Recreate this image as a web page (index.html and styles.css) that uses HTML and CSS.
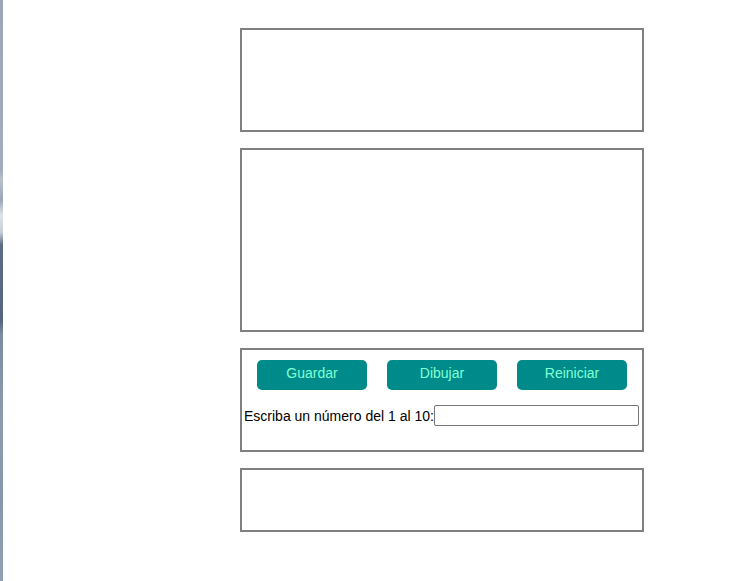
FILE: index.html
```html
<!DOCTYPE html>
<html lang="es">
<head>
<meta charset="utf-8">
<title>Dibujar</title>
<link rel="stylesheet" href="styles.css">
</head>
<body>
<div class="edge"></div>
<main class="page">
  <section class="panel panel-top"></section>
  <section class="panel panel-canvas"></section>
  <section class="panel panel-controls">
    <div class="buttons">
      <button class="btn" type="button">Guardar</button>
      <button class="btn" type="button">Dibujar</button>
      <button class="btn" type="button">Reiniciar</button>
    </div>
    <div class="field">
      <label class="field-label" for="num">Escriba un número del 1 al 10:</label><input class="field-input" id="num" type="text">
    </div>
  </section>
  <section class="panel panel-bottom"></section>
</main>
</body>
</html>
```
FILE: styles.css
```css
html, body {
  margin: 0;
  padding: 0;
  height: 100%;
  background: #ffffff;
}
body {
  display: flex;
  font-family: "Liberation Sans", Arial, sans-serif;
  font-size: 14px;
  color: #000;
}
.edge {
  flex: 0 0 3px;
  min-height: 581px;
  background: linear-gradient(to bottom,
    #9ba7b7 0px, #a3adbb 170px, #b8c0cc 180px, #9aa6b6 200px,
    #dfe3e8 215px, #c9cfd8 232px, #5d6c82 245px, #56657c 320px,
    #7d8ca1 335px, #8e9bae 420px, #8796aa 500px, #93a0b2 581px);
}
.page {
  flex: 1;
  display: flex;
  flex-direction: column;
  gap: 16px;
  padding: 28px 0 0 237px;
}
.panel {
  box-sizing: border-box;
  width: 404px;
  border: 2px solid #808080;
}
.panel-top { height: 104px; }
.panel-canvas { height: 184px; }
.panel-controls {
  height: 104px;
  display: flex;
  flex-direction: column;
  padding: 10px 0 0 2px;
}
.panel-bottom { height: 64px; }
.buttons {
  display: flex;
  justify-content: center;
  gap: 20px;
  padding-right: 2px;
}
.btn {
  width: 110px;
  height: 30px;
  border: none;
  border-radius: 5px;
  background: #008b8b;
  color: #7fffd4;
  font-family: "Liberation Sans", Arial, sans-serif;
  font-size: 14px;
  padding: 0 0 4px;
}
.field {
  display: flex;
  align-items: center;
  margin-top: 15px;
}
.field-label {
  white-space: nowrap;
}
.field-input {
  box-sizing: border-box;
  width: 205px;
  height: 21px;
  border: 1px solid #767676;
  border-radius: 2px;
  padding: 1px 2px;
  font-size: 13.33px;
}
```
